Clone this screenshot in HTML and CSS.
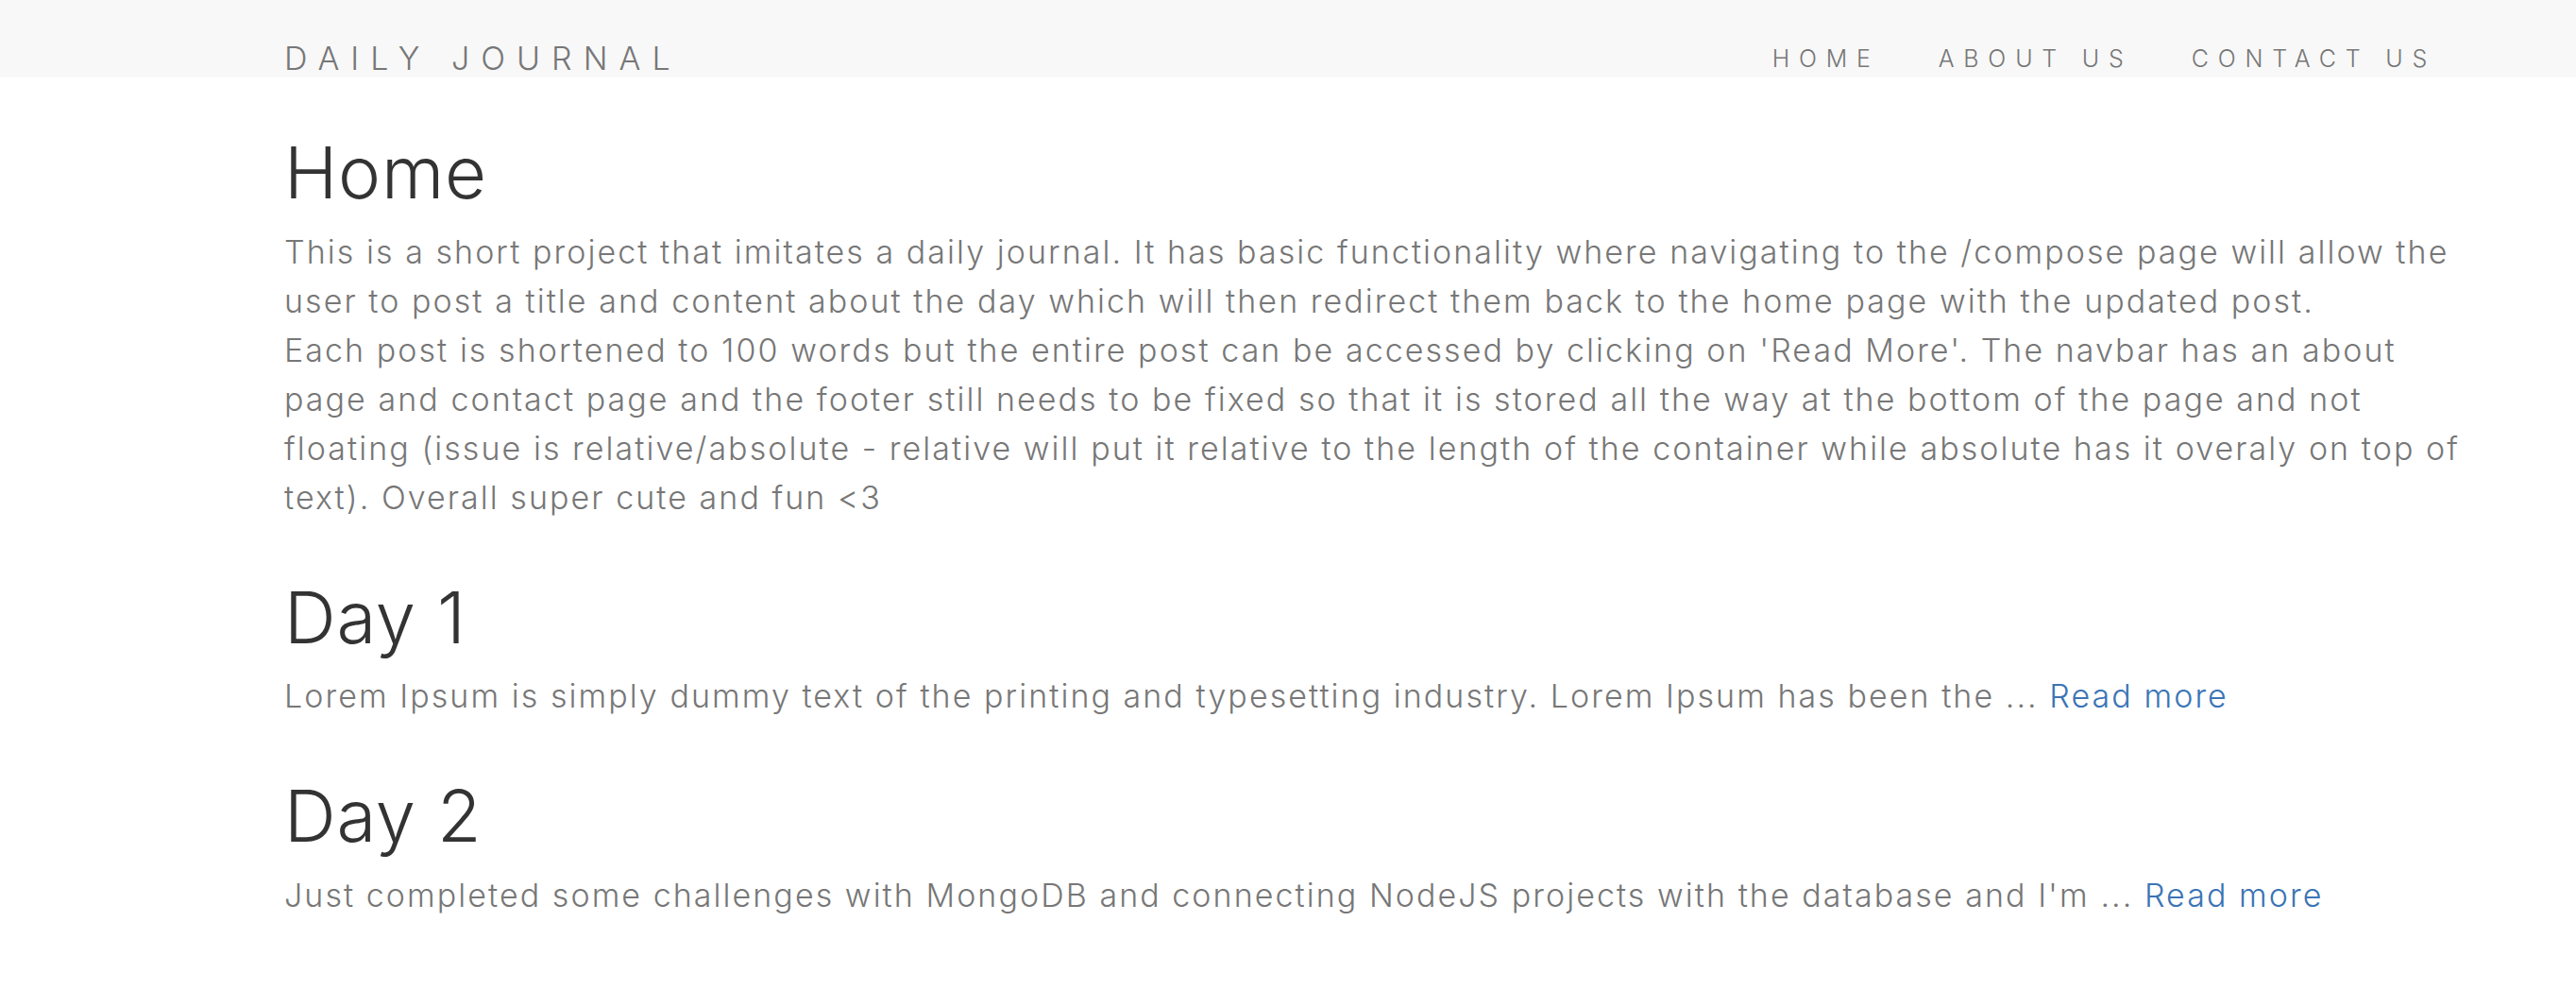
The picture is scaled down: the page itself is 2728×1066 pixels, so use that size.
FILE: index.html
```html
<!DOCTYPE html>
<html lang="en">
<head>
<meta charset="utf-8">
<title>Daily Journal</title>
<link rel="stylesheet" href="styles.css">
</head>
<body>
<header class="navbar">
  <div class="navbar-inner">
    <a class="brand" href="#">DAILY JOURNAL</a>
    <nav class="nav-links">
      <a href="#">HOME</a>
      <a href="#">ABOUT US</a>
      <a href="#">CONTACT US</a>
    </nav>
  </div>
</header>
<main class="container">
  <section class="post">
    <h1>Home</h1>
    <p>This is a short project that imitates a daily journal. It has basic functionality where navigating to the /compose page will allow the<br>
    user to post a title and content about the day which will then redirect them back to the home page with the updated post.<br>
    Each post is shortened to 100 words but the entire post can be accessed by clicking on 'Read More'. The navbar has an about<br>
    page and contact page and the footer still needs to be fixed so that it is stored all the way at the bottom of the page and not<br>
    floating (issue is relative/absolute - relative will put it relative to the length of the container while absolute has it overaly on top of<br>
    text). Overall super cute and fun &lt;3</p>
  </section>
  <section class="post">
    <h1>Day 1</h1>
    <p>Lorem Ipsum is simply dummy text of the printing and typesetting industry. Lorem Ipsum has been the ... <a class="read-more" href="#">Read more</a></p>
  </section>
  <section class="post">
    <h1>Day 2</h1>
    <p>Just completed some challenges with MongoDB and connecting NodeJS projects with the database and I'm ... <a class="read-more" href="#">Read more</a></p>
  </section>
</main>
</body>
</html>
```
FILE: styles.css
```css
html, body {
  margin: 0;
  padding: 0;
  background: #ffffff;
}

body {
  font-family: "Inter", "Liberation Sans", sans-serif;
  font-weight: 300;
  color: #777777;
}

a {
  text-decoration: none;
}

.navbar {
  background: #f8f8f8;
  height: 82px;
}

.navbar-inner {
  display: flex;
  justify-content: space-between;
  align-items: flex-start;
  padding: 0 148px 0 301px;
}

.brand {
  color: #777777;
  font-size: 34px;
  line-height: 40px;
  letter-spacing: 12px;
  padding-top: 42px;
}

.nav-links {
  display: flex;
  gap: 62px;
  padding-top: 47px;
}

.nav-links a {
  color: #777777;
  font-size: 25px;
  line-height: 30px;
  letter-spacing: 9.8px;
}

.container {
  padding: 0 60px 0 301px;
}

.post h1 {
  margin: 59px 0 16px;
  font-size: 76px;
  line-height: 1.1;
  font-weight: 300;
  color: #333333;
  letter-spacing: 0.8px;
}

.post p {
  margin: 0;
  font-size: 34px;
  line-height: 52px;
  letter-spacing: 2.05px;
  color: #777777;
}

.read-more {
  color: #3b74b5;
}
```
